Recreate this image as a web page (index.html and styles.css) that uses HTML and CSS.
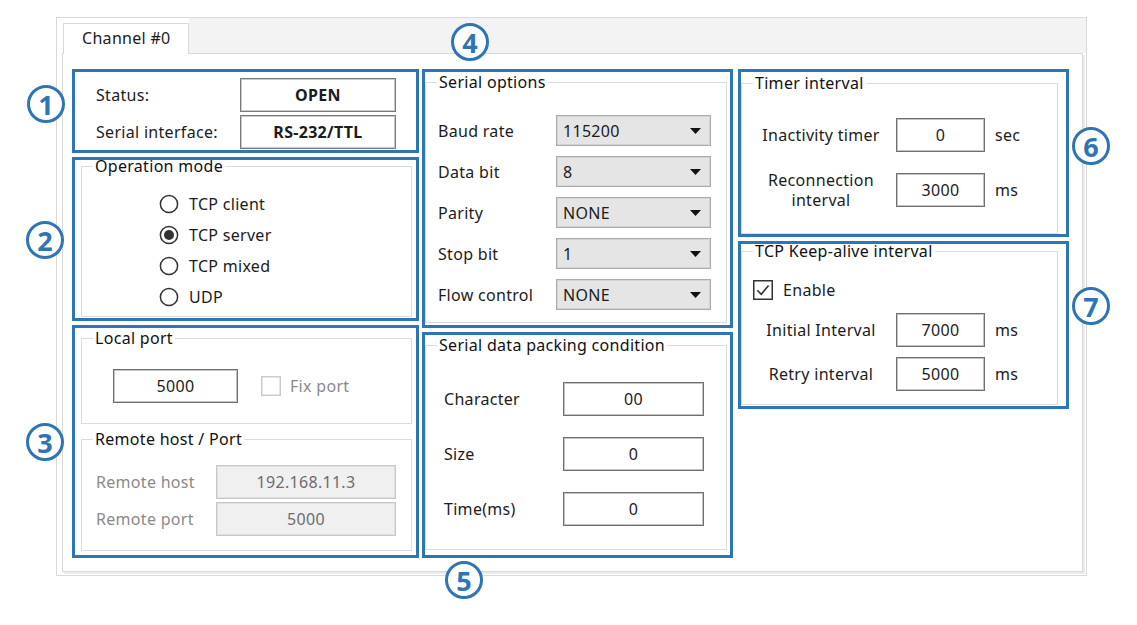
FILE: index.html
```html
<!DOCTYPE html>
<html lang="en">
<head>
<meta charset="utf-8">
<title>Channel settings</title>
<link rel="stylesheet" href="styles.css">
</head>
<body>
<div class="canvas">
  <div class="window">
    <div class="tabbar">
      <div class="tab">Channel #0</div>
      <div class="tabfill"></div>
    </div>
    <div class="page">
      <div class="col col1">
        <section class="anno s1">
          <div class="status-grid">
            <span class="lbl">Status:</span><div class="valbox">OPEN</div>
            <span class="lbl">Serial interface:</span><div class="valbox">RS-232/TTL</div>
          </div>
        </section>
        <section class="anno s2">
          <fieldset class="grp g-op">
            <legend>Operation mode</legend>
            <div class="radios">
              <div class="radio"><svg class="rb" viewBox="0 0 20 20" width="20" height="20"><circle cx="10" cy="10" r="8.6" fill="#fff" stroke="#333" stroke-width="1.5"/></svg><span>TCP client</span></div>
              <div class="radio"><svg class="rb" viewBox="0 0 20 20" width="20" height="20"><circle cx="10" cy="10" r="8.6" fill="#fff" stroke="#333" stroke-width="1.5"/><circle cx="10" cy="10" r="5" fill="#333"/></svg><span>TCP server</span></div>
              <div class="radio"><svg class="rb" viewBox="0 0 20 20" width="20" height="20"><circle cx="10" cy="10" r="8.6" fill="#fff" stroke="#333" stroke-width="1.5"/></svg><span>TCP mixed</span></div>
              <div class="radio"><svg class="rb" viewBox="0 0 20 20" width="20" height="20"><circle cx="10" cy="10" r="8.6" fill="#fff" stroke="#333" stroke-width="1.5"/></svg><span>UDP</span></div>
            </div>
          </fieldset>
        </section>
        <section class="anno s3">
          <fieldset class="grp g-local">
            <legend>Local port</legend>
            <div class="local-row">
              <input class="tb tb-local" type="text" value="5000" readonly>
              <svg class="cb" viewBox="0 0 20 20" width="20" height="20"><rect x="0.75" y="0.75" width="18.5" height="18.5" fill="#fff" stroke="#cccccc" stroke-width="1.5"/></svg>
              <span class="dis-text">Fix port</span>
            </div>
          </fieldset>
          <fieldset class="grp g-remote">
            <legend>Remote host / Port</legend>
            <div class="remote-grid">
              <span class="dis-text">Remote host</span><input class="tb tb-dis" type="text" value="192.168.11.3" readonly disabled>
              <span class="dis-text">Remote port</span><input class="tb tb-dis" type="text" value="5000" readonly disabled>
            </div>
          </fieldset>
        </section>
      </div>

      <div class="col col2">
        <section class="anno s4">
          <fieldset class="grp g-serial">
            <legend>Serial options</legend>
            <div class="serial-grid">
              <span>Baud rate</span><div class="combo"><span>115200</span><svg class="arrow" viewBox="0 0 11 6" width="11" height="6"><polygon points="0,0 11,0 5.5,6" fill="#111"/></svg></div>
              <span>Data bit</span><div class="combo"><span>8</span><svg class="arrow" viewBox="0 0 11 6" width="11" height="6"><polygon points="0,0 11,0 5.5,6" fill="#111"/></svg></div>
              <span>Parity</span><div class="combo"><span>NONE</span><svg class="arrow" viewBox="0 0 11 6" width="11" height="6"><polygon points="0,0 11,0 5.5,6" fill="#111"/></svg></div>
              <span>Stop bit</span><div class="combo"><span>1</span><svg class="arrow" viewBox="0 0 11 6" width="11" height="6"><polygon points="0,0 11,0 5.5,6" fill="#111"/></svg></div>
              <span>Flow control</span><div class="combo"><span>NONE</span><svg class="arrow" viewBox="0 0 11 6" width="11" height="6"><polygon points="0,0 11,0 5.5,6" fill="#111"/></svg></div>
            </div>
          </fieldset>
        </section>
        <section class="anno s5">
          <fieldset class="grp g-pack">
            <legend>Serial data packing condition</legend>
            <div class="pack-grid">
              <span>Character</span><input class="tb" type="text" value="00" readonly>
              <span>Size</span><input class="tb" type="text" value="0" readonly>
              <span>Time(ms)</span><input class="tb" type="text" value="0" readonly>
            </div>
          </fieldset>
        </section>
      </div>

      <div class="col col3">
        <section class="anno s6">
          <fieldset class="grp g-timer">
            <legend>Timer interval</legend>
            <div class="unit-grid timer-grid">
              <span class="clbl">Inactivity timer</span><input class="tb" type="text" value="0" readonly><span>sec</span>
              <span class="clbl">Reconnection<br>interval</span><input class="tb" type="text" value="3000" readonly><span>ms</span>
            </div>
          </fieldset>
        </section>
        <section class="anno s7">
          <fieldset class="grp g-keep">
            <legend>TCP Keep-alive interval</legend>
            <div class="enable-row">
              <svg class="cb" viewBox="0 0 20 20" width="20" height="20"><rect x="0.75" y="0.75" width="18.5" height="18.5" fill="#fff" stroke="#333" stroke-width="1.5"/><path d="M4.3 10.2 L8.2 14.2 L15.6 5.6" fill="none" stroke="#333" stroke-width="1.6"/></svg>
              <span>Enable</span>
            </div>
            <div class="unit-grid keep-grid">
              <span class="clbl">Initial Interval</span><input class="tb" type="text" value="7000" readonly><span>ms</span>
              <span class="clbl">Retry interval</span><input class="tb" type="text" value="5000" readonly><span>ms</span>
            </div>
          </fieldset>
        </section>
      </div>
    </div>
  </div>

  <div class="badge b1">1</div>
  <div class="badge b2">2</div>
  <div class="badge b3">3</div>
  <div class="badge b4">4</div>
  <div class="badge b5">5</div>
  <div class="badge b6">6</div>
  <div class="badge b7">7</div>
</div>
</body>
</html>
```

FILE: styles.css
```css
* { box-sizing: border-box; }
html, body { margin: 0; padding: 0; background: #fff; }
body {
  font-family: "Noto Sans", "DejaVu Sans", sans-serif;
  font-size: 16px;
  letter-spacing: 0.3px;
  color: #1c1c1c;
}

.canvas { position: relative; width: 1137px; height: 625px; padding: 17px 0 0 56px; }

.window {
  width: 1031px;
  height: 559px;
  border: 1px solid #d9d9d9;
  display: flex;
  flex-direction: column;
}

.tabbar { display: flex; align-items: flex-start; height: 35px; padding-left: 6px; }
.tab {
  position: relative;
  z-index: 1;
  margin-top: 5px;
  width: 126px;
  height: 31px;
  border: 1px solid #d9d9d9;
  border-bottom: 0;
  background: #fff;
  padding-left: 18px;
  line-height: 29px;
}
.tabfill { flex: 1; height: 35px; background: #f3f3f3; }

.page {
  margin: 0 3px 3px 5px;
  height: 519px;
  border: 1px solid #d9d9d9;
  box-shadow: 2px 2px 0 #ebebeb;
  padding: 15px 0 0 9px;
  display: flex;
  align-items: flex-start;
}

.col { display: flex; flex-direction: column; gap: 4px; }
.col1 { width: 347px; }
.col2 { width: 311px; margin-left: 3px; }
.col3 { width: 331px; margin-left: 5px; }

.anno { outline: 3px solid #2e75b6; outline-offset: -3px; }
.s1 { height: 84px; padding: 9px 0 0 24px; }
.s2 { height: 164px; padding: 0 0 0 9px; }
.s3 { height: 233px; padding: 4px 0 0 9px; }
.s4 { height: 259px; padding: 4px 0 0 3px; }
.s5 { height: 226px; padding: 4px 0 0 3px; }
.s6 { height: 168px; padding: 5px 0 0 3px; }
.s7 { height: 168px; padding: 1px 0 0 3px; }

/* group boxes */
.grp { margin: 0; padding: 0; border: 1px solid #dcdcdc; min-width: 0; }
.grp legend { margin-left: 11px; padding: 0 2px; line-height: 18px; font-size: 16px; color: #111; }
.g-op { width: 331px; height: 160px; }
.g-local { width: 331px; height: 95px; }
.g-remote { width: 331px; height: 121px; margin-top: 6px; }
.g-serial { width: 302px; height: 250px; }
.g-pack { width: 302px; height: 214px; }
.g-timer { width: 317px; height: 160px; }
.g-keep { width: 317px; height: 163px; }

/* status */
.status-grid {
  display: grid;
  grid-template-columns: 144px 156px;
  grid-auto-rows: 34px;
  row-gap: 3px;
  align-items: center;
}
.valbox {
  height: 34px;
  border: 1px solid #7a7a7a;
  box-shadow: inset 0 0 0 1px #c9c9c9;
  display: flex;
  align-items: center;
  justify-content: center;
  font-weight: 700;
}

/* radios */
.radios { margin-top: 13px; padding-left: 77px; display: flex; flex-direction: column; }
.radio { height: 31px; display: flex; align-items: center; gap: 10px; }
.rb { display: block; flex: none; }

/* text boxes */
.tb {
  font: inherit;
  letter-spacing: inherit;
  color: #1c1c1c;
  text-align: center;
  height: 34px;
  margin: 0;
  padding: 0;
  border: 1px solid #707070;
  box-shadow: inset 0 0 0 1px #c4c4c4;
  background: #fff;
  border-radius: 0;
  outline: none;
}
.tb-dis {
  color: #6d6d6d;
  background: #f0f0f0;
  border-color: #c8c8c8;
  box-shadow: inset 0 0 0 1px #e0e0e0;
}
.dis-text { color: #8a8a8a; }

.local-row { margin-top: 22px; padding-left: 31px; display: flex; align-items: center; }
.tb-local { width: 125px; }
.local-row .cb { margin-left: 23px; display: block; }
.local-row .dis-text { margin-left: 9px; }

.remote-grid {
  margin-top: 17px;
  padding-left: 14px;
  display: grid;
  grid-template-columns: 120px 180px;
  grid-auto-rows: 34px;
  row-gap: 3px;
  align-items: center;
}
.remote-grid .tb { width: 180px; }

/* serial options */
.serial-grid {
  margin-top: 24px;
  padding-left: 12px;
  display: grid;
  grid-template-columns: 118px 155px;
  grid-auto-rows: 31px;
  row-gap: 10px;
  align-items: center;
}
.combo {
  height: 31px;
  background: #e5e5e5;
  border: 1px solid #acacac;
  box-shadow: inset 0 0 0 1px #d4d4d4;
  display: flex;
  align-items: center;
  justify-content: space-between;
  padding: 0 9px 0 6px;
}
.arrow { display: block; }

/* packing */
.pack-grid {
  margin-top: 28px;
  padding-left: 18px;
  display: grid;
  grid-template-columns: 119px 141px;
  grid-auto-rows: 34px;
  row-gap: 21px;
  align-items: center;
}
.pack-grid .tb { width: 141px; }

/* timer / keepalive */
.unit-grid {
  padding-left: 19px;
  display: grid;
  grid-template-columns: 135px 99px auto;
  grid-auto-rows: 34px;
  align-items: center;
}
.unit-grid .tb { width: 89px; }
.clbl { width: 120px; text-align: center; line-height: 20px; }
.timer-grid { margin-top: 26px; row-gap: 21px; }
.keep-grid { margin-top: 13px; row-gap: 10px; }
.enable-row { margin-top: 20px; padding-left: 11px; height: 20px; display: flex; align-items: center; gap: 10px; }
.enable-row .cb { display: block; }

/* annotation badges */
.badge {
  position: absolute;
  width: 38px;
  height: 38px;
  border: 3px solid #2e75b6;
  border-radius: 50%;
  color: #2e75b6;
  font-family: "Noto Sans", "DejaVu Sans", sans-serif;
  font-weight: 700;
  font-size: 27px;
  letter-spacing: 0;
  line-height: 1;
  display: flex;
  align-items: center;
  justify-content: center;
  background: #fff;
}
.b1 { left: 27px; top: 85px; }
.b2 { left: 26px; top: 221px; }
.b3 { left: 26px; top: 423px; }
.b4 { left: 451px; top: 23px; }
.b5 { left: 445px; top: 561px; }
.b6 { left: 1072px; top: 127px; }
.b7 { left: 1072px; top: 287px; }
```
